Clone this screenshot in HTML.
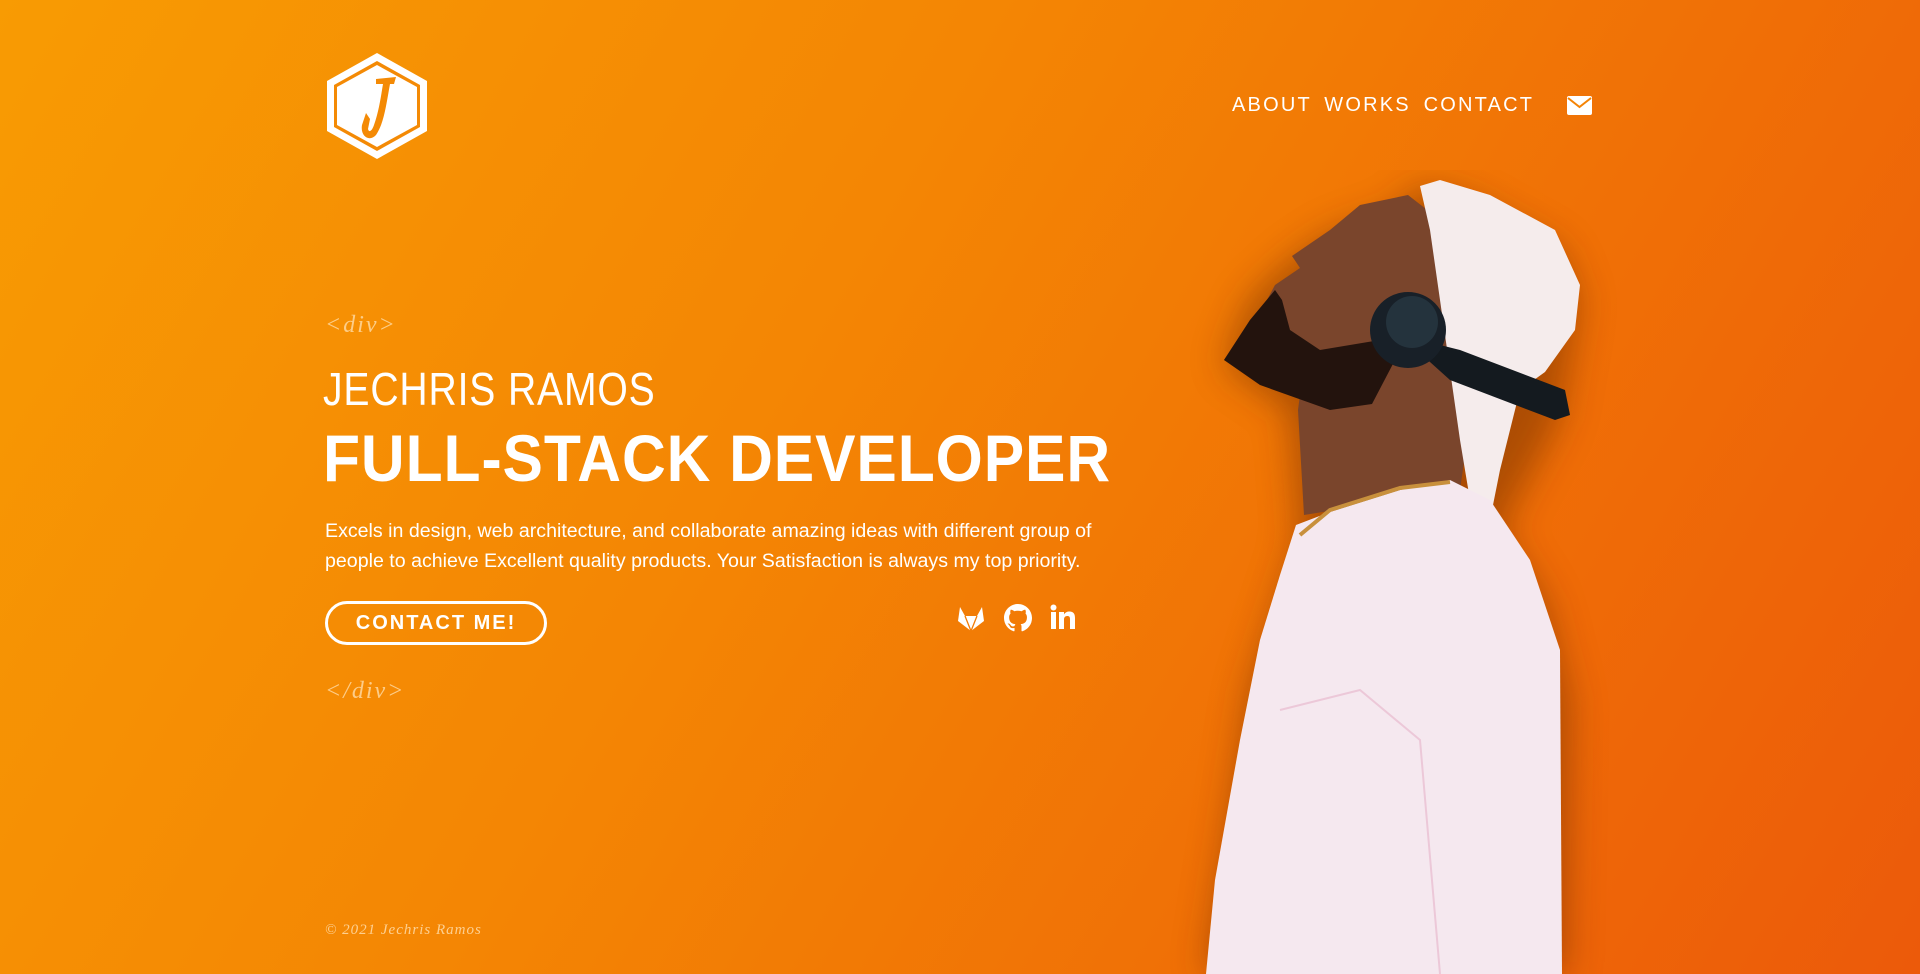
<!DOCTYPE html>
<html><head><meta charset="utf-8"><style>
*{margin:0;padding:0;box-sizing:border-box}
body{width:1920px;height:974px;overflow:hidden;position:relative;font-family:"Liberation Sans",sans-serif;color:#fff;
background:linear-gradient(120deg,#f89b03 0%,#f48604 40%,#f07006 70%,#ec5a0a 100%)}
.abs{position:absolute}
.nav{top:94px;left:1232px;font-size:20px;letter-spacing:2.2px;word-spacing:5px}
.tag{font-family:"Liberation Serif",serif;font-style:italic;color:rgba(255,225,180,.75);font-size:24px;letter-spacing:2px}
.name{top:362px;left:323px;font-size:46px;font-weight:300;letter-spacing:1px;transform:scaleX(.85);transform-origin:left}
.title{top:420px;left:323px;font-size:66px;font-weight:700;letter-spacing:1px;transform:scaleX(.918);transform-origin:left}
.p{top:516px;left:325px;width:810px;font-size:19.6px;line-height:30px}
.btn{top:601px;left:325px;width:222px;height:44px;border:3px solid #fff;border-radius:22px;font-size:20px;font-weight:700;letter-spacing:2px;text-align:center;line-height:38px}
.foot{top:922px;left:325px;font-family:"Liberation Serif",serif;font-style:italic;font-size:15px;color:rgba(255,225,180,.8);letter-spacing:1px}
</style></head><body>
<svg class="abs" style="left:324px;top:51px" width="106" height="110" viewBox="0 0 106 110">
<polygon points="53,2 103,30 103,80 53,108 3,80 3,30" fill="#fff"/>
<polygon points="53,10 96,34 96,76 53,100 10,76 10,34" fill="#f48a05"/>
<polygon points="53,14 93,36 93,74 53,96 13,74 13,36" fill="#fff"/>
<path d="M52,28 L72,26 L70,33 L66,33 C62,55 60,72 52,84 C46,91 36,86 38,74 L42,62 L46,68 L44,78 C45,82 48,80 50,74 C55,60 57,45 59,33 L52,33 Z" fill="#f48a05"/>
</svg>
<div class="abs nav">ABOUT WORKS CONTACT</div>
<svg class="abs" style="left:1567px;top:96px" width="25" height="19" viewBox="0 0 25 19"><rect width="25" height="19" rx="2" fill="#fff"/><path d="M1,2 L12.5,11 L24,2" stroke="#f48305" stroke-width="2" fill="none"/></svg>
<div class="abs tag" style="top:312px;left:325px">&lt;div&gt;</div>
<div class="abs name">JECHRIS RAMOS</div>
<div class="abs title">FULL-STACK DEVELOPER</div>
<div class="abs p">Excels in design, web architecture, and collaborate amazing ideas with different group of people to achieve Excellent quality products. Your Satisfaction is always my top priority.</div>
<div class="abs btn">CONTACT ME!</div>
<svg class="abs" style="left:957px;top:605px" width="28" height="27" viewBox="0 0 28 27"><path d="M14,26 L1,16 L3,2 L8,11 L20,11 L25,2 L27,16 Z" fill="#fff"/><path d="M14,26 L8,11 M14,26 L20,11" stroke="#f27c06" stroke-width="1.3"/></svg>
<svg class="abs" style="left:1004px;top:604px" width="28" height="28" viewBox="0 0 16 16"><path fill="#fff" d="M8 0C3.580 0 0 3.58 0 8c0 3.54 2.290 6.53 5.47 7.59.4.07.55-.17.55-.38 0-.19-.01-.82-.01-1.49-2.01.37-2.53-.49-2.69-.94-.09-.23-.48-.94-.82-1.130-.28-.15-.68-.52-.01-.53.63-.01 1.08.58 1.23.82.72 1.21 1.87.87 2.33.66.07-.52.28-.87.51-1.07-1.78-.2-3.64-.89-3.64-3.95 0-.87.31-1.59.82-2.15-.08-.2-.36-1.020.08-2.12 0 0 .67-.21 2.2.82.64-.18 1.32-.27 2-.27.68 0 1.360.09 2 .27 1.53-1.04 2.2-.82 2.2-.82.44 1.1.16 1.92.08 2.12.51.56.82 1.27.82 2.15 0 3.07-1.870 3.75-3.65 3.95.29.25.54.73.54 1.48 0 1.07-.01 1.93-.01 2.2 0 .21.15.46.55.38A8.013 8.013 0 0016 8c0-4.42-3.58-8-8-8z"/></svg>
<svg class="abs" style="left:1050px;top:604px" width="26" height="26" viewBox="0 0 26 26"><rect x="1" y="8" width="5" height="17" fill="#fff"/><circle cx="3.5" cy="3.5" r="3" fill="#fff"/><path d="M9,8 H14 V10.5 C15.5,8 17.5,7.5 19.5,7.5 C23.5,7.5 25,10 25,14 V25 H20 V15 C20,13 19.3,12 17.3,12 C15,12 14,13.5 14,15.5 V25 H9 Z" fill="#fff"/></svg>
<div class="abs tag" style="top:678px;left:325px">&lt;/div&gt;</div>
<div class="abs foot">© 2021 Jechris Ramos</div>
<svg class="abs" style="left:1150px;top:170px" width="500" height="804" viewBox="1150 170 500 804">
<defs><filter id="b" x="-30%" y="-30%" width="160%" height="160%"><feGaussianBlur stdDeviation="18"/></filter></defs>
<g filter="url(#b)" opacity=".5" fill="#6a2a00">
<path d="M1420,186 L1470,200 L1560,250 L1580,300 L1560,420 L1500,530 L1545,600 L1570,700 L1565,974 L1206,974 L1250,690 L1300,540 L1290,410 L1224,365 L1250,300 L1290,262 L1330,235 L1400,210 Z"/>
</g>
<path d="M1408,195 L1360,205 L1330,230 L1292,256 L1300,268 L1275,285 L1267,300 L1250,320 L1224,360 L1300,395 L1298,410 L1304,515 L1460,490 L1470,420 L1445,300 L1440,220 Z" fill="#7a452c"/>
<path d="M1275,290 L1250,320 L1224,360 L1260,385 L1330,410 L1372,404 L1395,360 L1380,340 L1320,350 L1290,330 L1282,300 Z" fill="#23130d"/>
<path d="M1420,186 L1440,180 L1490,195 L1555,230 L1580,285 L1575,330 L1545,372 L1520,390 L1500,470 L1490,520 L1470,500 L1460,440 L1440,300 L1430,230 Z" fill="#f5ecec"/>
<path d="M1400,335 L1460,350 L1565,390 L1570,415 L1555,420 L1450,380 Z" fill="#141a1f"/>
<circle cx="1408" cy="330" r="38" fill="#182028"/>
<circle cx="1412" cy="322" r="26" fill="#24333d"/>
<path d="M1296,525 L1330,512 L1400,490 L1450,480 L1490,500 L1530,560 L1560,650 L1562,974 L1206,974 L1215,880 L1240,740 L1260,640 L1280,575 Z" fill="#f5e8ef"/>
<path d="M1300,535 L1330,510 L1400,488 L1450,482" stroke="#c8903c" stroke-width="4" fill="none"/>
<path d="M1280,710 L1360,690 L1420,740 L1440,974" stroke="#ecc8d8" stroke-width="2" fill="none"/>
</svg>
</body></html>
